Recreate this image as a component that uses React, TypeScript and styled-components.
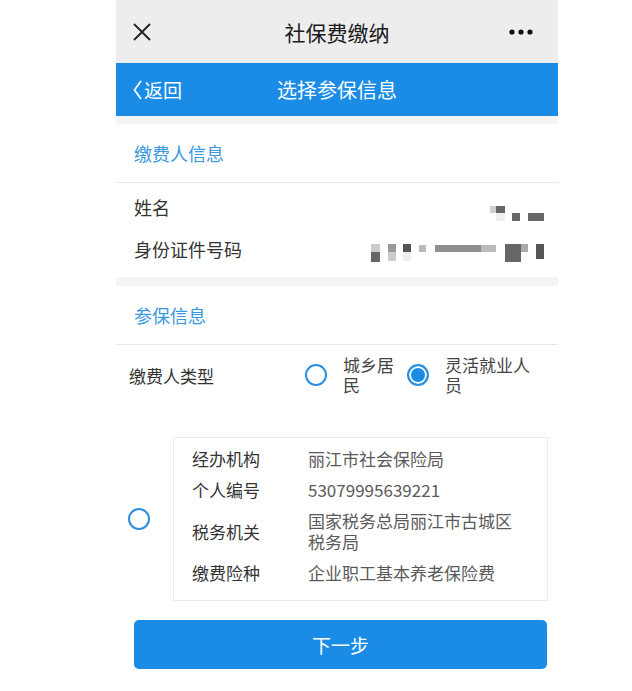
import React from 'react'
import styled, { createGlobalStyle } from 'styled-components'

const BLUE = '#1a8ce6'

const GlobalStyle = createGlobalStyle`
  body {
    margin: 0;
    background: #fff;
    font-family: "Noto Sans CJK SC", "Noto Sans", sans-serif;
    color: #333;
  }
`

const Phone = styled.div`
  width: 442px;
  margin-left: 116px;
  background: #fff;
`

const Bar = styled.div<{ $blue?: boolean }>`
  display: grid;
  grid-template-columns: 90px 1fr 90px;
  align-items: center;
  height: ${(p) => (p.$blue ? 53 : 63)}px;
  background: ${(p) => (p.$blue ? BLUE : '#ededed')};
  color: ${(p) => (p.$blue ? '#fff' : '#1a1a1a')};
`

const BarTitle = styled.div<{ $size: number }>`
  text-align: center;
  font-size: ${(p) => p.$size}px;
  white-space: nowrap;
`

const BarLeft = styled.div`
  display: flex;
  align-items: center;
  padding-left: 17px;
`

const BarRight = styled.div`
  display: flex;
  justify-content: flex-end;
  padding-right: 25px;
`

const BackText = styled.span`
  font-size: 19px;
  margin-left: 2px;
`

const Gap = styled.div<{ $h: number }>`
  height: ${(p) => p.$h}px;
  background: #f4f4f4;
`

const SectionHead = styled.div`
  height: 58px;
  display: flex;
  align-items: center;
  padding-left: 18px;
  font-size: 18px;
  color: #3a98de;
  border-bottom: 1px solid #e8e8e8;
`

const InfoBlock = styled.div`
  padding: 3px 12px 7px 18px;
`

const InfoRow = styled.div`
  height: 42px;
  display: flex;
  align-items: center;
  justify-content: space-between;
  font-size: 18px;
  color: #333;
`

const Mosaic = styled.svg<{ $shift: number }>`
  display: block;
  margin-top: ${(p) => p.$shift}px;
`

const TypeRow = styled.div`
  display: grid;
  grid-template-columns: 176px auto;
  align-items: center;
  padding: 10px 0 14px 13px;
`

const TypeLabel = styled.div`
  font-size: 17px;
  color: #333;
`

const Options = styled.div`
  display: flex;
  align-items: center;
`

const Option = styled.label`
  display: flex;
  align-items: center;
  margin-right: 10px;
`

const Radio = styled.span<{ $checked?: boolean }>`
  flex: none;
  width: 22px;
  height: 22px;
  box-sizing: border-box;
  border-radius: 50%;
  border: 2px solid #2a8fe0;
  background: ${(p) => (p.$checked ? BLUE : '#fff')};
  box-shadow: ${(p) => (p.$checked ? 'inset 0 0 0 2px #fff' : 'none')};
`

const OptionText = styled.span<{ $w: number }>`
  width: ${(p) => p.$w}px;
  margin-left: 16px;
  font-size: 17px;
  line-height: 20px;
  color: #444;
`

const CardRow = styled.div`
  display: flex;
  align-items: center;
  margin-top: 28px;
  padding: 0 10px 0 12px;
`

const Card = styled.div`
  flex: 1;
  margin-left: 23px;
  border: 1px solid #ececec;
  padding: 5px 28px 12px 18px;
`

const CardLine = styled.div`
  display: grid;
  grid-template-columns: 116px 1fr;
  align-items: center;
  padding: 5px 0;
  font-size: 17px;
  line-height: 21px;
`

const CardKey = styled.div`
  color: #333;
`

const CardValue = styled.div`
  color: #5a5a5a;
`

const NextButton = styled.button`
  display: block;
  width: 413px;
  height: 49px;
  margin: 19px 0 0 18px;
  border: none;
  border-radius: 5px;
  background: ${BLUE};
  color: #fff;
  font-family: inherit;
  font-size: 19px;
`

const CloseIcon = () => (
  <svg width="18" height="18" viewBox="0 0 18 18">
    <path d="M1 1 L17 17 M17 1 L1 17" stroke="#222" strokeWidth="1.8" fill="none" />
  </svg>
)

const MoreIcon = () => (
  <svg width="24" height="6" viewBox="0 0 24 6">
    <circle cx="3" cy="3" r="2.6" fill="#111" />
    <circle cx="12" cy="3" r="2.6" fill="#111" />
    <circle cx="21" cy="3" r="2.6" fill="#111" />
  </svg>
)

const BackIcon = () => (
  <svg width="9" height="20" viewBox="0 0 9 20">
    <path d="M8 1 L1.5 10 L8 19" stroke="#fff" strokeWidth="1.8" fill="none" />
  </svg>
)

type Block = [number, number, number, number, string]

const nameBlocks: Block[] = [
  [0, 0, 6, 7, '#cfcfcf'],
  [6, 0, 9, 7, '#666'],
  [6, 7, 9, 8, '#eee'],
  [22, 7, 8, 8, '#666'],
  [38, 7, 16, 8, '#666'],
]

const idBlocks: Block[] = [
  [0, 1, 9, 8, '#ccc'],
  [0, 9, 9, 10, '#666'],
  [17, 1, 8, 8, '#999'],
  [17, 9, 8, 9, '#ccc'],
  [32, 1, 8, 8, '#555'],
  [32, 9, 8, 9, '#eee'],
  [48, 2, 7, 7, '#bbb'],
  [64, 2, 46, 7, '#8f8f8f'],
  [110, 2, 15, 7, '#bbb'],
  [134, 1, 16, 18, '#666'],
  [150, 1, 7, 8, '#aaa'],
  [165, 1, 8, 15, '#555'],
]

const Pixels = ({ blocks, w, h, shift }: { blocks: Block[]; w: number; h: number; shift: number }) => (
  <Mosaic width={w} height={h} $shift={shift}>
    {blocks.map(([x, y, bw, bh, c], i) => (
      <rect key={i} x={x} y={y} width={bw} height={bh} fill={c} />
    ))}
  </Mosaic>
)

const details = [
  { key: '经办机构', value: '丽江市社会保险局' },
  { key: '个人编号', value: '53079995639221' },
  { key: '税务机关', value: '国家税务总局丽江市古城区税务局' },
  { key: '缴费险种', value: '企业职工基本养老保险费' },
]

export default function App() {
  return (
    <>
      <GlobalStyle />
      <Phone>
        <Bar>
          <BarLeft>
            <CloseIcon />
          </BarLeft>
          <BarTitle $size={21}>社保费缴纳</BarTitle>
          <BarRight>
            <MoreIcon />
          </BarRight>
        </Bar>
        <Bar $blue>
          <BarLeft>
            <BackIcon />
            <BackText>返回</BackText>
          </BarLeft>
          <BarTitle $size={20}>选择参保信息</BarTitle>
          <div />
        </Bar>
        <Gap $h={8} />
        <SectionHead>缴费人信息</SectionHead>
        <InfoBlock>
          <InfoRow>
            姓名
            <Pixels blocks={nameBlocks} w={56} h={16} shift={14} />
          </InfoRow>
          <InfoRow>
            身份证件号码
            <Pixels blocks={idBlocks} w={175} h={20} shift={7} />
          </InfoRow>
        </InfoBlock>
        <Gap $h={9} />
        <SectionHead>参保信息</SectionHead>
        <TypeRow>
          <TypeLabel>缴费人类型</TypeLabel>
          <Options>
            <Option>
              <Radio />
              <OptionText $w={54}>城乡居民</OptionText>
            </Option>
            <Option>
              <Radio $checked />
              <OptionText $w={88}>灵活就业人员</OptionText>
            </Option>
          </Options>
        </TypeRow>
        <CardRow>
          <Radio />
          <Card>
            {details.map((d) => (
              <CardLine key={d.key}>
                <CardKey>{d.key}</CardKey>
                <CardValue>{d.value}</CardValue>
              </CardLine>
            ))}
          </Card>
        </CardRow>
        <NextButton>下一步</NextButton>
      </Phone>
    </>
  )
}
